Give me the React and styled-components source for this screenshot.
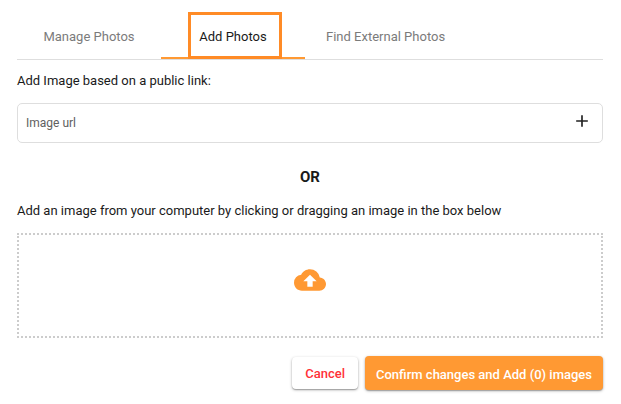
import React, { useState } from 'react';
import styled, { createGlobalStyle } from 'styled-components';
import { MdAdd } from 'react-icons/md';

const GlobalStyle = createGlobalStyle`
    * {
        box-sizing: border-box;
    }

    body {
        margin: 0;
        background-color: #fff;
        color: #1a1a1a;
        font-family: Roboto, 'Open Sans', sans-serif;
        font-size: 13px;
        line-height: 20px;
    }

    button, input {
        font: inherit;
    }
`

const Page = styled.main`
    display: flex;
    flex-flow: column;
    padding: 11px 18px 12px 17px;
`

const TabBar = styled.div`
    display: flex;
    border-bottom: 1px solid #dedede;
`

const Tab = styled.button`
    position: relative;
    min-width: 144px;
    height: 48px;
    padding: 5px 21px 0;
    border: none;
    border-bottom: 2px solid ${({ $active }) => ($active ? '#ff9933' : 'transparent')};
    background: none;
    color: ${({ $active }) => ($active ? '#1a1a1a' : '#7b7b7b')};
    white-space: nowrap;
    cursor: pointer;
`

const Highlight = styled.span`
    position: absolute;
    top: 1px;
    left: 27px;
    right: 23px;
    bottom: -2px;
    border: 3px solid #ff8b26;
    pointer-events: none;
`

const Text = styled.p`
    margin: 0;
    padding: ${({ $first }) => ($first ? '11px 0 12px' : '13px 0 12px')};
`

const UrlField = styled.div`
    display: flex;
    align-items: center;
    height: 40px;
    padding: 0 10px 0 8px;
    border: 1px solid #dedede;
    border-radius: 5px;
`

const UrlInput = styled.input`
    flex: 1;
    min-width: 0;
    padding: 0;
    border: none;
    outline: none;
    background: none;
    font-size: 12px;

    &::placeholder {
        color: #606060;
        opacity: 1;
    }
`

const AddButton = styled.button`
    display: flex;
    padding: 0 0 4px;
    border: none;
    background: none;
    color: #222;
    font-size: 20px;
    cursor: pointer;
`

const Divider = styled.h2`
    margin: 24px 0 0;
    padding-bottom: 1px;
    font-size: 15px;
    line-height: 20px;
    font-weight: 700;
    text-align: center;
`

const DropZone = styled.label`
    display: flex;
    justify-content: center;
    align-items: center;
    height: 105px;
    padding-bottom: 12px;
    border: 2px dotted #ccc;
    cursor: pointer;
`

const FileInput = styled.input`
    position: absolute;
    width: 1px;
    height: 1px;
    opacity: 0;
`

const CloudIcon = styled.svg`
    width: 32px;
    height: 32px;
    fill: #ff9933;
`

const Actions = styled.div`
    display: flex;
    justify-content: flex-end;
    align-items: center;
    gap: 7px;
    padding-top: 18px;
`

const Button = styled.button`
    height: ${({ $primary }) => ($primary ? '34px' : '32px')};
    padding: ${({ $primary }) => ($primary ? '3px 11px 0' : '1px 13px 0')};
    border: none;
    border-radius: 4px;
    background-color: ${({ $primary }) => ($primary ? '#ff9933' : '#fff')};
    color: ${({ $primary }) => ($primary ? '#fff' : '#ff3038')};
    box-shadow: 0 1px 3px rgba(0, 0, 0, 0.3), 0 1px 1px rgba(0, 0, 0, 0.2);
    font-weight: 500;
    white-space: nowrap;
    cursor: pointer;
`

const tabs = ['Manage Photos', 'Add Photos', 'Find External Photos'];

function App() {
    const [activeTab, setActiveTab] = useState('Add Photos');
    const [url, setUrl] = useState('');

    return(
        <>
            <GlobalStyle />
            <Page>
                <TabBar role='tablist'>
                    {tabs.map(tab =>
                        <Tab
                            key={tab}
                            type='button'
                            role='tab'
                            aria-selected={tab === activeTab}
                            $active={tab === activeTab}
                            onClick={() => setActiveTab(tab)}
                        >
                            {tab}
                            {tab === 'Add Photos' && <Highlight />}
                        </Tab>)}
                </TabBar>
                <Text $first>Add Image based on a public link:</Text>
                <UrlField>
                    <UrlInput
                        type='url'
                        aria-label='Image url'
                        placeholder='Image url'
                        value={url}
                        onChange={e => setUrl(e.target.value)}
                    />
                    <AddButton type='button' aria-label='Add image url'>
                        <MdAdd />
                    </AddButton>
                </UrlField>
                <Divider>OR</Divider>
                <Text>Add an image from your computer by clicking or dragging an image in the box below</Text>
                <DropZone>
                    <FileInput type='file' accept='image/*' multiple aria-label='Upload images' />
                    <CloudIcon viewBox='0 0 24 24' aria-hidden='true'>
                        <path d='M19.35 10.04A7.49 7.49 0 0 0 12 4C9.11 4 6.6 5.64 5.35 8.04A5.994 5.994 0 0 0 0 14c0 3.31 2.69 6 6 6h13c2.76 0 5-2.24 5-5 0-2.64-2.05-4.78-4.65-4.96zM14 13v4h-4v-4H7l5-5 5 5h-3z' />
                    </CloudIcon>
                </DropZone>
                <Actions>
                    <Button type='button'>Cancel</Button>
                    <Button type='button' $primary>Confirm changes and Add (0) images</Button>
                </Actions>
            </Page>
        </>
    )
}

export default App;
